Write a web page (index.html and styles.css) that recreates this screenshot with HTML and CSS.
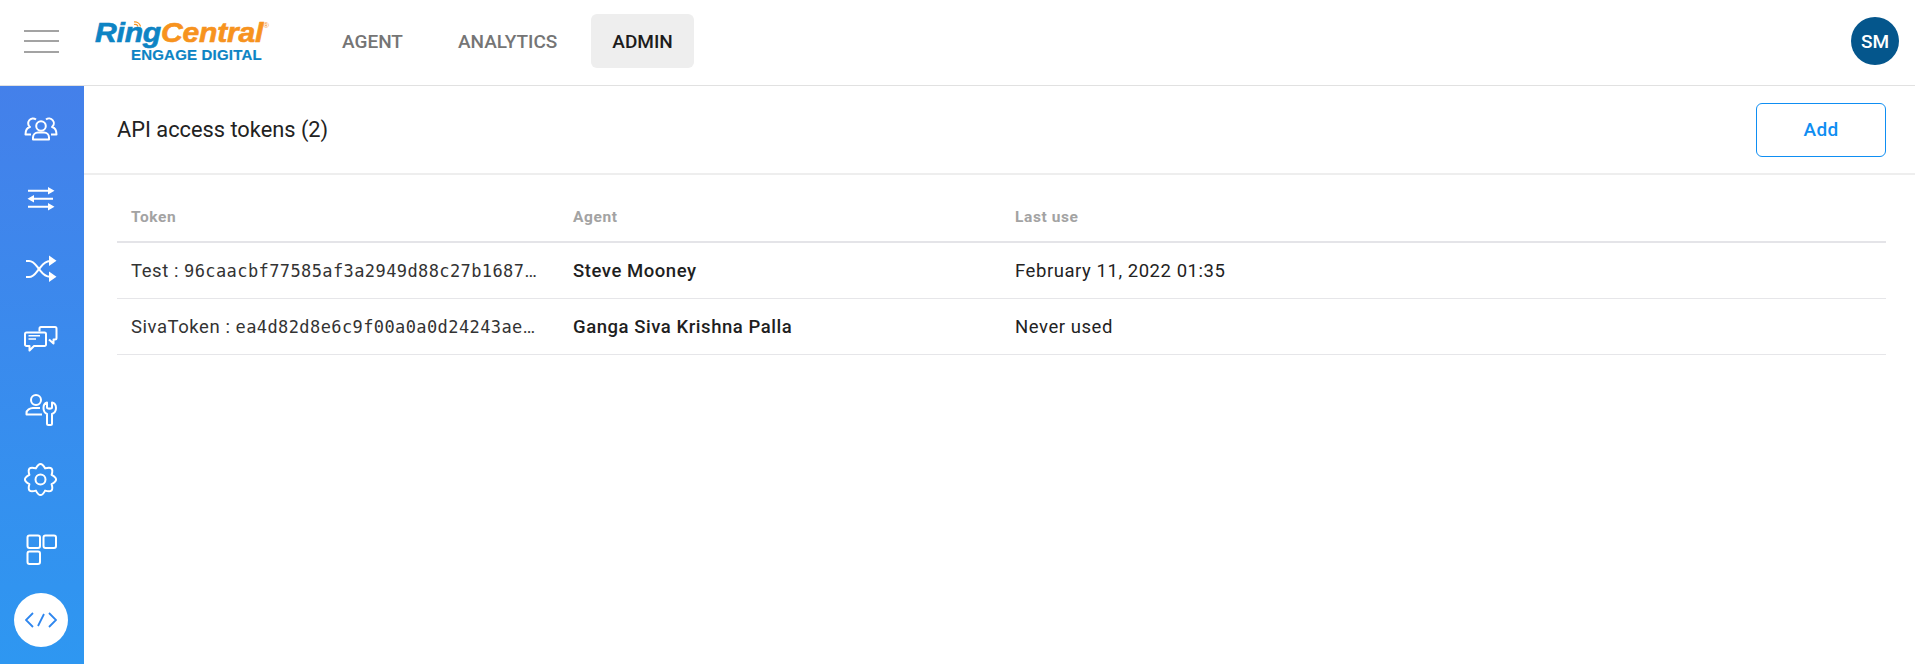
FILE: index.html
```html
<!DOCTYPE html>
<html lang="en">
<head>
<meta charset="utf-8">
<title>API access tokens</title>
<link rel="stylesheet" href="styles.css">
</head>
<body>
<header class="topbar">
  <button class="burger" aria-label="Menu"><span></span><span></span><span></span></button>
  <div class="logo">
    <svg class="wifi" viewBox="0 0 8 8"><path d="M1 3.500a3 3 0 0 1 4 2M1 1a6 6 0 0 1 6.500 4.500"/></svg>
    <div class="logo-main"><span class="ring">Ring</span><span class="central">Central</span><sup class="reg">®</sup></div>
    <div class="logo-sub">ENGAGE DIGITAL</div>
  </div>
  <nav class="nav">
    <a class="nav-item">AGENT</a>
    <a class="nav-item">ANALYTICS</a>
    <a class="nav-item active">ADMIN</a>
  </nav>
  <div class="avatar">SM</div>
</header>
<div class="shell">
  <aside class="sidebar">
    <div class="side-item"><svg viewBox="0 0 50 50" class="ico"><circle cx="25" cy="21" r="4.800"/><path d="M17 34.500h16v-2a5 5 0 0 0-5-5h-6a5 5 0 0 0-5 5zM20 14.500A4.500 4.500 0 1 0 14 22C10 23 9.500 27 9.500 29.500H15M30 14.500A4.500 4.500 0 1 1 36 22C40 23 40.500 27 40.500 29.500H35"/></svg></div>
    <div class="side-item"><svg viewBox="0 0 50 50" class="ico"><path d="M12 15.700H33M17 23.700H37M12 31.700H33"/><path class="fill" d="M32 12 38.500 15.700 32 19.400zM11.500 23.700 18 20v7.400zM32 28 38.500 31.700 32 35.400z"/></svg></div>
    <div class="side-item"><svg viewBox="0 0 50 50" class="ico"><path d="M10 16h3c5 0 7 4.500 10 8s5 7.500 11 7.700M10 32h3c5 0 7-4.500 10-8s5-7.800 11-8"/><path class="fill" d="M33 10.500 40.500 15.700 33 21zM33 26.500 40.500 31.700 33 37z"/></svg></div>
    <div class="side-item"><svg viewBox="0 0 50 50" class="ico"><path d="M23.500 16.500v-3a1.500 1.500 0 0 1 1.500-1.500h14a1.500 1.500 0 0 1 1.500 1.500V23a1.500 1.500 0 0 1-1.500 1.500h-1.500v4L33 24.500"/><path d="M10.500 17.500h18a1.500 1.500 0 0 1 1.500 1.500v10.500a1.500 1.500 0 0 1-1.500 1.500H18l-4.500 4.500V31h-3A1.500 1.500 0 0 1 9 29.500V19a1.500 1.500 0 0 1 1.500-1.500z"/><path class="thin" d="M12.500 20.700H24M12.500 24H20"/></svg></div>
    <div class="side-item"><svg viewBox="0 0 50 50" class="ico"><circle cx="20" cy="15" r="5"/><path d="M26 29.500H10.500V28C10.500 25 14 23 17 23H24"/><path d="M31 29C28.500 28 27.500 26 27.500 23S29 18 31 17.500V22.500C31 24 36 24 36 22.500V17.500C38 18 40 20 40 23S38.500 28 36 29V38.500A1.500 1.500 0 0 1 34.500 40H32.500A1.500 1.500 0 0 1 31 38.500z"/></svg></div>
    <div class="side-item"><svg viewBox="0 0 50 50" class="ico"><circle cx="24.500" cy="24.500" r="5"/><path transform="translate(24.500 24.500)" d="M-4.600-11.100Q0-20 4.600-11.100 14.100-14.100 11.100-4.600 20 0 11.100 4.600 14.100 14.100 4.600 11.100 0 20-4.600 11.100-14.100 14.100-11.100 4.600-20 0-11.100-4.600-14.100-14.100-4.600-11.100Z"/></svg></div>
    <div class="side-item"><svg viewBox="0 0 50 50" class="ico"><rect x="11.500" y="10.500" width="12.500" height="12.500" rx="2"/><rect x="27.500" y="10.500" width="12.500" height="12.500" rx="2"/><rect x="11.500" y="26.500" width="12.500" height="12.500" rx="2"/></svg></div>
    <div class="side-item"><div class="side-active"><svg viewBox="0 0 32 16" class="code"><path d="M8 1 1 8l7 7M24 1l7 7-7 7M13 14l6-12"/></svg></div></div>
  </aside>
  <main class="content">
    <div class="panel-head">
      <h1 class="title">API access tokens (2)</h1>
      <button class="btn-add">Add</button>
    </div>
    <div class="table-wrap">
      <div class="row row-head">
        <div class="cell">Token</div>
        <div class="cell">Agent</div>
        <div class="cell">Last use</div>
      </div>
      <div class="row">
        <div class="cell token">Test : <code>96caacbf77585af3a2949d88c27b1687</code>…</div>
        <div class="cell agent">Steve Mooney</div>
        <div class="cell">February 11, 2022 01:35</div>
      </div>
      <div class="row">
        <div class="cell token">SivaToken : <code>ea4d82d8e6c9f00a0a0d24243ae</code>…</div>
        <div class="cell agent">Ganga Siva Krishna Palla</div>
        <div class="cell">Never used</div>
      </div>
    </div>
  </main>
</div>
</body>
</html>
```
FILE: styles.css
```css
* { box-sizing: border-box; }
html, body { margin: 0; height: 100%; }
body {
  font-family: Roboto, "Liberation Sans", sans-serif;
  color: #222;
  background: #fff;
  height: 664px;
  overflow: hidden;
  display: flex;
  flex-direction: column;
}
.topbar {
  height: 86px;
  flex: none;
  display: flex;
  align-items: center;
  border-bottom: 1px solid #e1e1e1;
  padding: 0 16px 3px 24px;
}
.burger {
  width: 35px;
  height: 23px;
  padding: 0;
  border: 0;
  background: none;
  display: flex;
  flex-direction: column;
  justify-content: space-between;
}
.burger span { display: block; height: 2px; width: 35px; background: #a3a3a3; }
.logo { position: relative; margin-left: 36px; width: 175px; height: 44px; }
.wifi { position: absolute; left: 38px; top: 2px; width: 8px; height: 8px; fill: none; stroke: #f7931e; stroke-width: 1.200; }
.logo-main {
  font-family: "Liberation Sans", sans-serif;
  font-weight: 700;
  font-style: italic;
  font-size: 27px;
  line-height: 28px;
  white-space: nowrap;
  transform: scaleX(1.115);
  transform-origin: left center;
  -webkit-text-stroke: .6px currentColor;
  letter-spacing: -.2px;
}
.ring { color: #0d84c4; }
.central { color: #f7931e; }
.reg { font-size: 7px; font-style: normal; font-weight: 400; color: #f7931e; vertical-align: 14px; line-height: 0; letter-spacing: 0; -webkit-text-stroke: 0; }
.logo-sub {
  font-family: "Liberation Sans", sans-serif;
  font-weight: 700;
  font-size: 15px;
  line-height: 16px;
  color: #0d84c4;
  margin-left: 36px;
  white-space: nowrap;
  letter-spacing: .2px;
  -webkit-text-stroke: .2px currentColor;
}
.nav { display: flex; align-items: center; margin-left: 51px; gap: 13px; }
.nav-item {
  height: 54px;
  padding: 0 21px;
  display: flex;
  align-items: center;
  font-size: 19px;
  font-weight: 500;
  color: #757575;
  border-radius: 6px;
}
.nav-item.active { background: #eee; color: #1c1c1c; }
.avatar {
  margin-left: auto;
  width: 48px;
  height: 48px;
  border-radius: 50%;
  background: #04568c;
  color: #fff;
  font-size: 19px;
  font-weight: 500;
  display: flex;
  align-items: center;
  justify-content: center;
}
.shell { flex: 1; display: flex; min-height: 0; }
.sidebar {
  width: 84px;
  flex: none;
  background: linear-gradient(180deg, #4480ea 0%, #2e97f1 100%);
  padding: 9px 2px 0 0;
  display: flex;
  flex-direction: column;
}
.side-item { height: 70px; flex: none; display: flex; align-items: center; justify-content: center; }
.ico { width: 50px; height: 50px; fill: none; stroke: #fff; stroke-width: 2; stroke-linejoin: round; }
.ico .fill { fill: #fff; stroke: none; }
.ico .thin { stroke-width: 1.500; }
.side-active {
  width: 54px;
  height: 54px;
  border-radius: 50%;
  background: #fff;
  display: flex;
  align-items: center;
  justify-content: center;
}
.code { width: 32px; height: 16px; fill: none; stroke: #2e86ee; stroke-width: 1.800; }
.content { flex: 1; min-width: 0; }
.panel-head {
  height: 89px;
  display: flex;
  align-items: center;
  justify-content: space-between;
  border-bottom: 2px solid #eee;
  padding: 0 29px 0 33px;
}
.title { margin: 0; font-size: 21.800px; font-weight: 400; color: #222; }
.btn-add {
  width: 130px;
  height: 54px;
  background: #fff;
  border: 1px solid #0f8ef2;
  border-radius: 6px;
  color: #0f8ef2;
  font-family: inherit;
  font-size: 19px;
  font-weight: 500;
  letter-spacing: .3px;
}
.table-wrap { padding: 0 29px 0 33px; }
.row {
  display: grid;
  grid-template-columns: 442px 442px 1fr;
  height: 56px;
  align-items: center;
  border-bottom: 1px solid #e6e6e9;
  font-size: 18.500px;
  letter-spacing: .55px;
}
.row-head {
  height: 68px;
  padding-top: 18px;
  border-bottom: 2px solid #e4e4e8;
  font-size: 15.500px;
  font-weight: 700;
  color: #a3a3a3;
  letter-spacing: .6px;
}
.cell { padding: 0 14px; white-space: nowrap; }
.token { color: #333; }
.token code { font-family: "DejaVu Sans Mono", monospace; font-size: 17px; letter-spacing: .4px; }
.agent { font-weight: 500; color: #1f1f1f; }
```
